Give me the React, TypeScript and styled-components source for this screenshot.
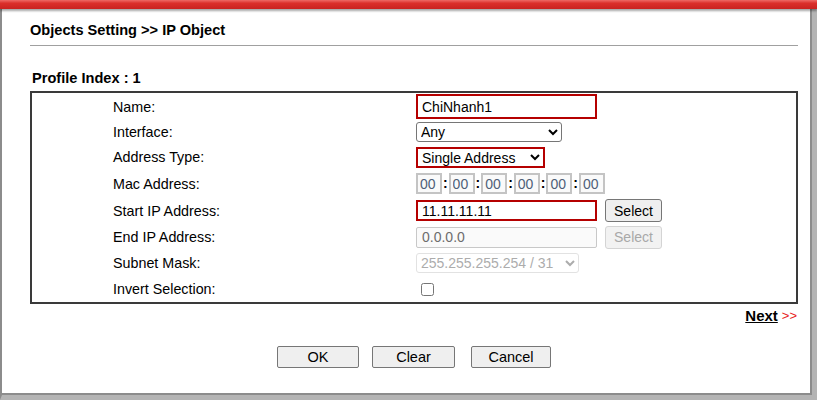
import styled, { createGlobalStyle } from 'styled-components'

const GlobalStyle = createGlobalStyle`
  html, body {
    margin: 0;
    padding: 0;
    background: #fff;
  }
  body {
    font-family: "Liberation Sans", Arial, sans-serif;
    color: #000;
  }
`

const Page = styled.div`
  width: 817px;
  height: 400px;
  display: flex;
  flex-direction: column;
  overflow: hidden;
`

const TopBar = styled.div`
  height: 9px;
  flex: none;
  background: linear-gradient(#ee6a66 0, #db2f2b 35%, #c92220 100%);
  box-shadow: 0 2px 2px rgba(0, 0, 0, 0.35);
  position: relative;
  z-index: 1;
`

const Frame = styled.div`
  flex: 1;
  box-sizing: border-box;
  border-left: 2px solid #8c8c8c;
  border-right: 5px solid #b4b4b4;
  border-bottom: 5px solid #b4b4b4;
  box-shadow: inset -2px -2px 0 #8c8c8c;
  padding: 13px 14px 0 28px;
`

const Title = styled.h1`
  margin: 0;
  font-size: 14.6px;
  line-height: 17px;
  font-weight: bold;
`

const Rule = styled.div`
  height: 1px;
  background: #a0a0a0;
  margin-top: 6px;
`

const ProfileHeading = styled.div`
  margin-top: 24px;
  padding-left: 2px;
  font-size: 14.6px;
  line-height: 17px;
  font-weight: bold;
`

const FormBox = styled.div`
  margin-top: 4px;
  border: 2px solid #3a3a3a;
  display: flex;
  flex-direction: column;
`

const Row = styled.div<{ $h: number }>`
  height: ${p => p.$h}px;
  display: flex;
  align-items: center;
`

const Label = styled.div`
  width: 303px;
  padding-left: 81px;
  font-size: 14.3px;
  flex: none;
`

const Field = styled.div`
  display: flex;
  align-items: center;
  gap: 8px;
`

const TextInput = styled.input<{ $w: number; $h: number; $hi?: boolean }>`
  box-sizing: border-box;
  width: ${p => p.$w}px;
  height: ${p => p.$h}px;
  margin: 0;
  padding: 0 4px;
  font-family: "Liberation Sans", Arial, sans-serif;
  font-size: 14px;
  color: #000;
  background: #fff;
  border: ${p => (p.$hi ? '2px solid #b50000' : '1px solid #c8c8c8')};
  border-radius: 0;
  outline: none;
  &:disabled {
    background: #fafafa;
    color: #6d6d6d;
    border-radius: 2px;
    padding-left: 5px;
  }
`

const Select = styled.select<{ $w: number; $h: number; $hi?: boolean }>`
  box-sizing: border-box;
  width: ${p => p.$w}px;
  height: ${p => p.$h}px;
  margin: 0;
  padding: 0;
  font-family: "Liberation Sans", Arial, sans-serif;
  font-size: 14px;
  color: #000;
  background: #fff;
  border: ${p => (p.$hi ? '2px solid #b50000' : '1px solid #767676')};
  border-radius: ${p => (p.$hi ? '0' : '3px')};
  &:disabled {
    color: #8a8a8a;
    border-color: #d6d6d6;
    background: #fff;
  }
`

const MacGroup = styled.div`
  display: flex;
  align-items: center;
`

const MacInput = styled.input`
  box-sizing: border-box;
  width: 26px;
  height: 21px;
  margin: 0;
  padding: 0 2px;
  font-family: "Liberation Sans", Arial, sans-serif;
  font-size: 14px;
  color: #4f5f78;
  background: #fafafa;
  border: 2px solid #c4c4c4;
  border-radius: 0;
`

const Colon = styled.span`
  width: 6.6px;
  text-align: center;
  font-size: 14px;
  font-weight: bold;
  line-height: 21px;
`

const SmallButton = styled.button`
  box-sizing: border-box;
  width: 57px;
  height: 23px;
  margin: 0;
  padding: 0;
  font-family: "Liberation Sans", Arial, sans-serif;
  font-size: 14px;
  color: #000;
  background: #efefef;
  border: 1px solid #767676;
  border-radius: 3px;
  &:disabled {
    color: #a8a8a8;
    border-color: #d4d4d4;
    background: #f2f2f2;
  }
`

const Check = styled.input`
  width: 13px;
  height: 13px;
  margin: 0 0 0 5px;
`

const NextRow = styled.div`
  height: 23px;
  display: flex;
  align-items: center;
  justify-content: flex-end;
  padding-right: 1px;
`

const NextLink = styled.a`
  font-size: 15px;
  font-weight: bold;
  color: #000;
  text-decoration: underline;
  cursor: pointer;
`

const Arrows = styled.span`
  color: #e8191a;
  font-size: 13px;
  margin-left: 4px;
`

const Actions = styled.div`
  margin-top: 19px;
  display: flex;
  justify-content: center;
`

const ActionButton = styled.button<{ $w: number; $gap: number }>`
  box-sizing: border-box;
  width: ${p => p.$w}px;
  height: 22px;
  margin: 0 0 0 ${p => p.$gap}px;
  padding: 0;
  font-family: "Liberation Sans", Arial, sans-serif;
  font-size: 14.5px;
  color: #000;
  background: #efefef;
  border: 1px solid #767676;
  border-radius: 2px;
`

export default function App() {
  const mac = ['00', '00', '00', '00', '00', '00']

  return (
    <>
      <GlobalStyle />
      <Page>
        <TopBar />
        <Frame>
          <Title>Objects Setting &gt;&gt; IP Object</Title>
          <Rule />
          <ProfileHeading>Profile Index : 1</ProfileHeading>
          <FormBox>
            <Row $h={27}>
              <Label>Name:</Label>
              <TextInput $w={181} $h={25} $hi defaultValue="ChiNhanh1" />
            </Row>
            <Row $h={24}>
              <Label>Interface:</Label>
              <Select $w={146} $h={20} defaultValue="any">
                <option value="any">Any</option>
              </Select>
            </Row>
            <Row $h={26}>
              <Label>Address Type:</Label>
              <Select $w={129} $h={21} $hi defaultValue="single">
                <option value="single">Single Address</option>
              </Select>
            </Row>
            <Row $h={27}>
              <Label>Mac Address:</Label>
              <MacGroup>
                {mac.map((v, i) => (
                  <MacGroup key={i}>
                    {i > 0 && <Colon>:</Colon>}
                    <MacInput defaultValue={v} />
                  </MacGroup>
                ))}
              </MacGroup>
            </Row>
            <Row $h={27}>
              <Label>Start IP Address:</Label>
              <Field>
                <TextInput $w={181} $h={21} $hi defaultValue="11.11.11.11" />
                <SmallButton>Select</SmallButton>
              </Field>
            </Row>
            <Row $h={26}>
              <Label>End IP Address:</Label>
              <Field>
                <TextInput $w={181} $h={21} disabled defaultValue="0.0.0.0" />
                <SmallButton disabled>Select</SmallButton>
              </Field>
            </Row>
            <Row $h={26}>
              <Label>Subnet Mask:</Label>
              <Select $w={163} $h={20} disabled defaultValue="31">
                <option value="31">255.255.255.254 / 31</option>
              </Select>
            </Row>
            <Row $h={26}>
              <Label>Invert Selection:</Label>
              <Check type="checkbox" />
            </Row>
          </FormBox>
          <NextRow>
            <NextLink>Next</NextLink>
            <Arrows>&gt;&gt;</Arrows>
          </NextRow>
          <Actions>
            <ActionButton $w={82} $gap={0}>OK</ActionButton>
            <ActionButton $w={83} $gap={13}>Clear</ActionButton>
            <ActionButton $w={80} $gap={16}>Cancel</ActionButton>
          </Actions>
        </Frame>
      </Page>
    </>
  )
}
